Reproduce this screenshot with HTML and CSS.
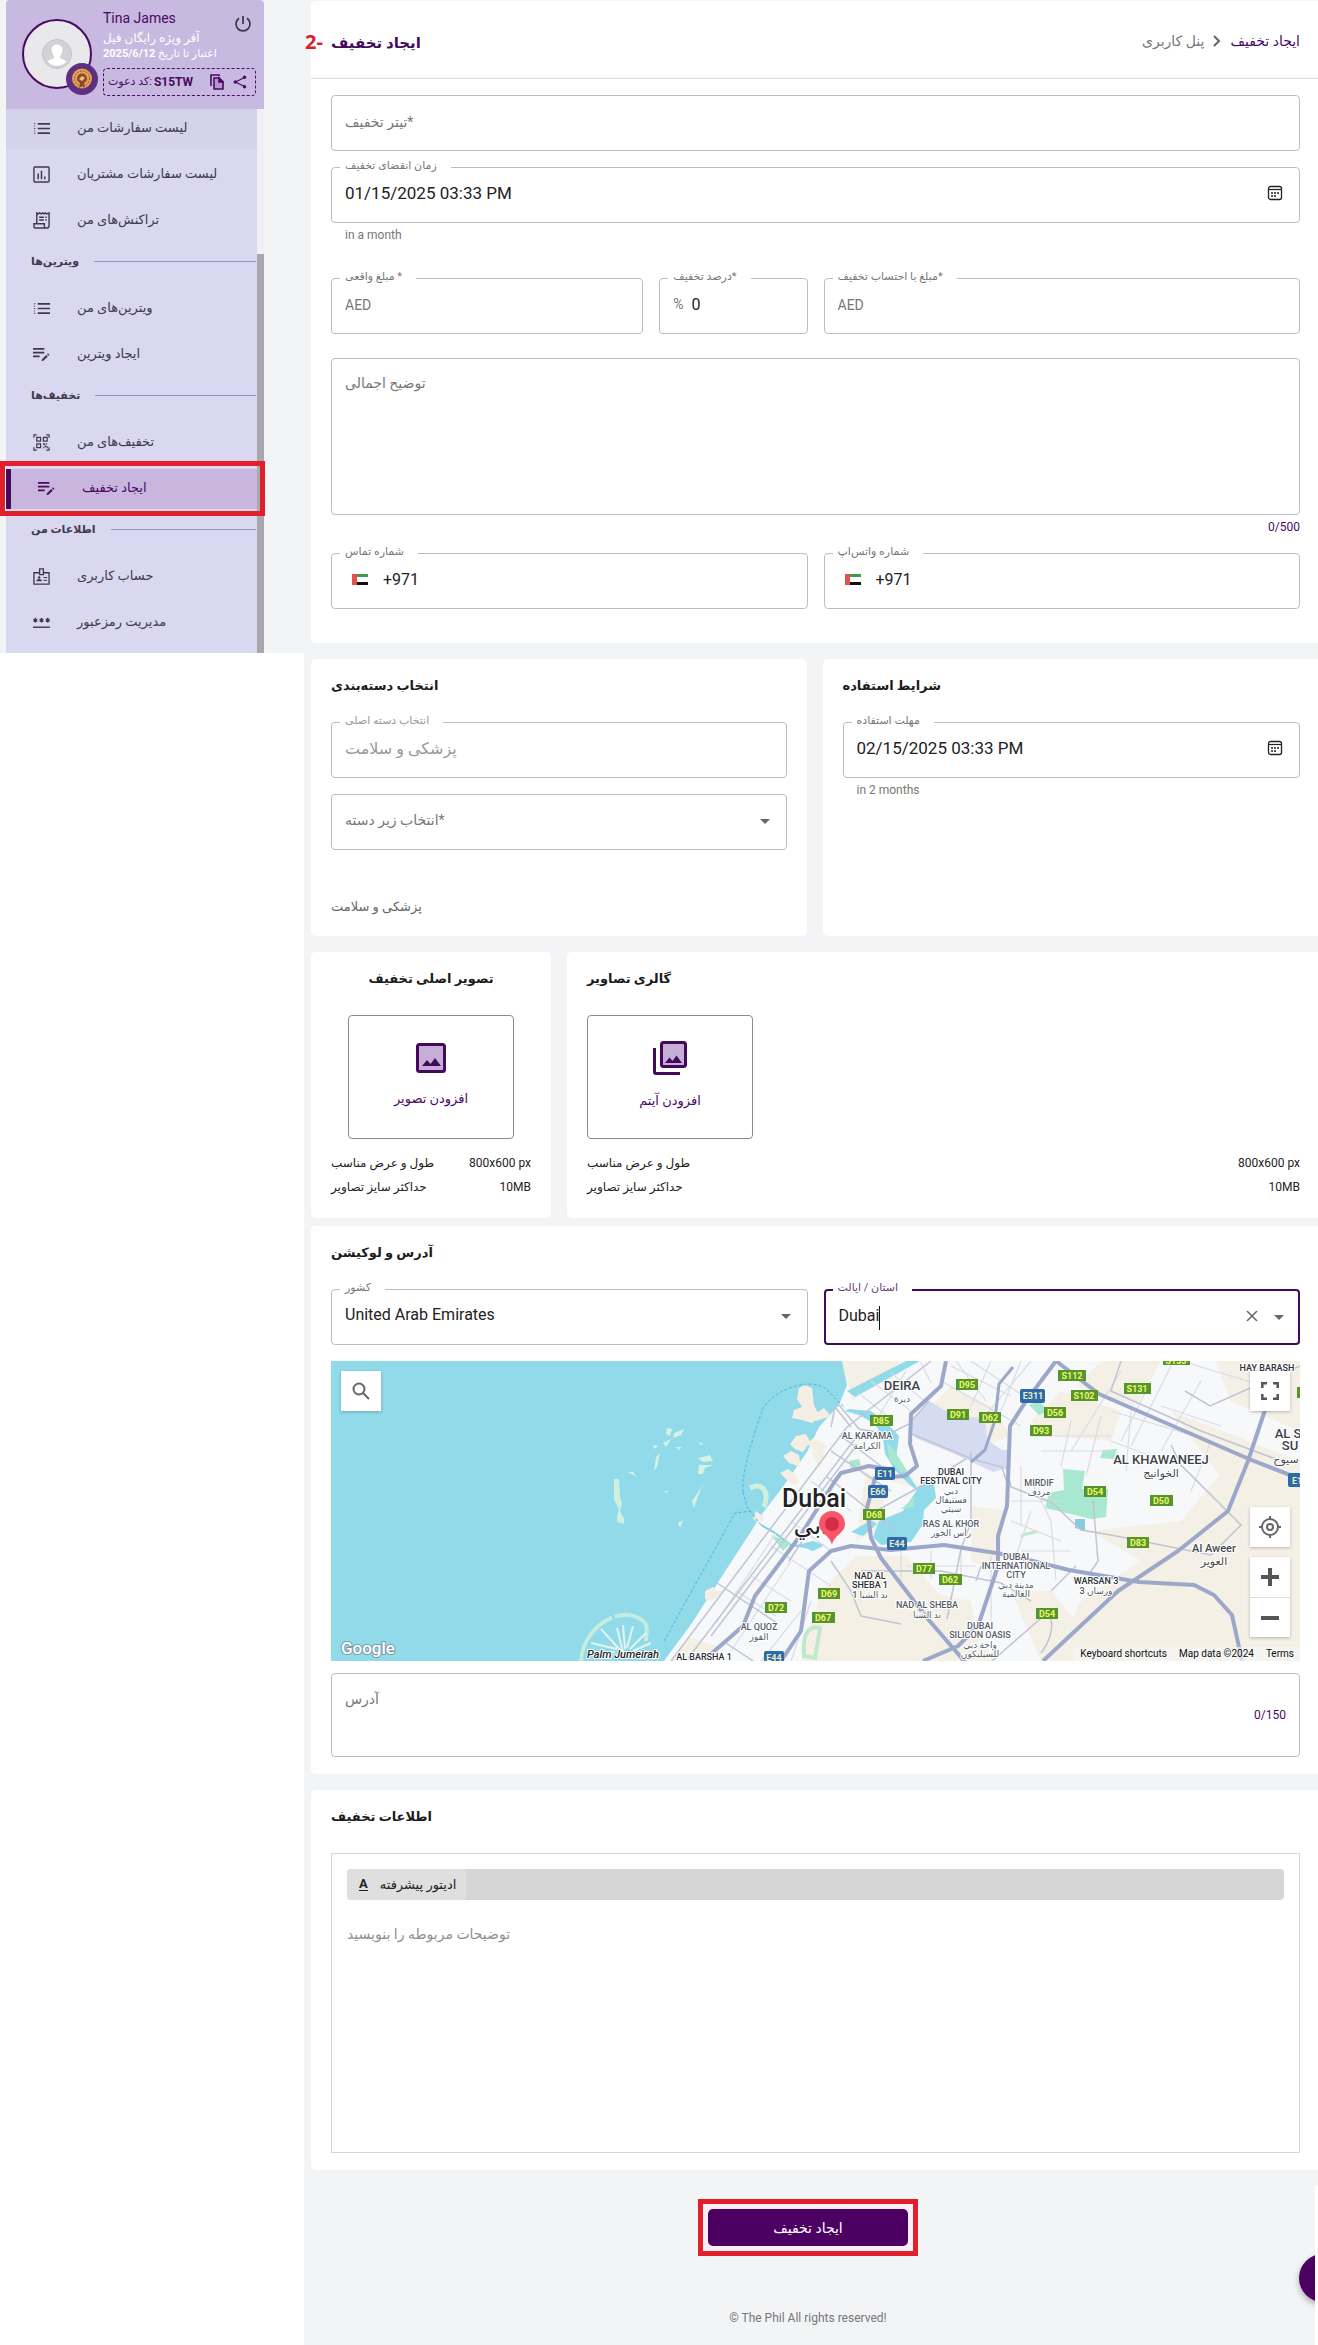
FILE: index.html
```html
<!DOCTYPE html>
<html lang="fa" dir="ltr">
<head>
<meta charset="utf-8">
<meta name="viewport" content="width=device-width, initial-scale=1">
<title>ایجاد تخفیف</title>
<link rel="stylesheet" href="styles.css">
</head>
<body>
<svg class="defs" aria-hidden="true">
  <symbol id="i-list" viewBox="0 0 18 18"><path d="M5 4h13M5 9h13M5 14h13" stroke="currentColor" stroke-width="1.8"/><path d="M1 4h1.400M1 9h1.400M1 14h1.400M1 6.500h1M1 11.500h1" stroke="currentColor" stroke-width="1"/></symbol>
  <symbol id="i-edit" viewBox="0 0 18 18"><path d="M0 3h12M0 7h12M0 11h7" stroke="currentColor" stroke-width="1.800"/><path d="M9 16l.5-2 4.500-4.500 1.700 1.700L11 15.600zM14.800 8.700l1-1 1.700 1.700-1 1z" fill="currentColor"/></symbol>
  <symbol id="i-calendar" viewBox="0 0 16 16"><rect x="1.500" y="1.500" width="13" height="13" rx="2" fill="none" stroke="currentColor" stroke-width="1.300"/><path d="M1.500 4.500h13" stroke="currentColor" stroke-width="1.200"/><path d="M4 8h2M7 8h2M10 8h2M4 11h2M7 11h2" stroke="currentColor" stroke-width="1.700"/></symbol>
  <symbol id="i-flag" viewBox="0 0 16 11"><path fill="#fff" d="M0 0h16v11H0z"/><path fill="#3f9a4a" d="M4 0h12v3H4z"/><path fill="#111" d="M4 8h12v3H4z"/><path fill="#e2504f" d="M0 0h5v11H0z"/></symbol>
</svg>

<aside class="side">
  <div class="profile">
    <div class="avatar">
      <svg viewBox="0 0 30 30" width="30" height="30"><circle cx="15" cy="15" r="14.500" fill="#d3d3d5" stroke="#c4c4c6"/><path d="M15 5.500c-3.600 0-5.500 2.500-5.300 6 .1 2 1 4 2.300 5.200v2c-1 1.600-5 1.600-6.300 4A12.500 12.500 0 0 0 24.300 22.700c-1.300-2.400-5.300-2.400-6.300-4v-2c1.300-1.200 2.200-3.200 2.300-5.200.2-3.500-1.700-6-5.300-6z" fill="#fff"/></svg>
      <svg class="medal" viewBox="0 0 32 32" width="32" height="32"><circle cx="16" cy="16" r="16" fill="#5f2f80"/><circle cx="16" cy="15.500" r="10" fill="#e0a153"/><circle cx="16" cy="15.500" r="7.500" fill="none" stroke="#8a4a2c" stroke-dasharray="1.500 1.500"/><circle cx="16" cy="15.500" r="5" fill="#8a4a2c"/><path d="M13 16l3-3 3 2-3 3z" fill="#f1c27a"/><path d="M14 20l-1 5 3-2 3 2-1-5z" fill="#8a4a2c"/></svg>
    </div>
    <div class="who">
      <div class="who-name"><span>Tina James</span>
        <button class="icon-btn" aria-label="خروج"><svg viewBox="0 0 18 18" width="18" height="18" fill="none" stroke="#3c3347" stroke-width="1.700"><path d="M9 1v8M5 3.200a7 7 0 1 0 8 0"/></svg></button>
      </div>
      <div class="who-plan" dir="rtl">آفر ویژه رایگان فیل</div>
      <div class="who-date" dir="rtl">اعتبار تا تاریخ <b>2025/6/12</b></div>
      <div class="invite">
        <span>کد دعوت</span><span>:</span><b>S15TW</b>
        <button class="icon-btn push" aria-label="کپی"><svg viewBox="0 0 14 16" width="14" height="16" fill="none" stroke="#4a0a63" stroke-width="1.600"><path d="M1 12V1h9"/><path d="M4 4h5l4 4v7H4z" fill="#b497cf"/><path d="M9 4v4h4z" fill="#4a0a63"/></svg></button>
        <button class="icon-btn" aria-label="اشتراک"><svg viewBox="0 0 14 14" width="14" height="14" fill="#4a0a63"><path d="M11.500 2.500L2.500 7l9 4.500" fill="none" stroke="#4a0a63" stroke-width="1.200"/><circle cx="11.500" cy="2.300" r="1.700"/><circle cx="2.300" cy="7" r="1.800"/><circle cx="11.500" cy="11.700" r="1.700"/></svg></button>
      </div>
    </div>
  </div>
  <div class="side-body">
    <nav class="menu">
      <a class="item hover" href="#"><svg><use href="#i-list"/></svg><span>لیست سفارشات من</span></a>
      <a class="item" href="#"><svg viewBox="0 0 18 18" fill="none" stroke="currentColor" stroke-width="1.500"><rect x="1" y="1" width="16" height="16" rx="1"/><path d="M5.500 8v6M9 5v9M12.500 11v3" stroke-width="1.600"/></svg><span>لیست سفارشات مشتریان</span></a>
      <a class="item" href="#"><svg viewBox="0 0 18 18" fill="none" stroke="currentColor" stroke-width="1.500"><path d="M4 12V1l1.500 1L7 1l1.500 1L10 1l1.500 1L13 1l1.500 1L17 1v13.500a2.500 2.500 0 0 1-2.500 2.500H3a2 2 0 0 1-2-2v-2.500h11V15a2 2 0 0 0 2.500 2"/><path d="M6.500 5.500h5M6.500 8.500h5M13 5.500h1.500M13 8.500h1.500"/></svg><span>تراکنش‌های من</span></a>
      <h3 class="section">ویترین‌ها</h3>
      <a class="item" href="#"><svg><use href="#i-list"/></svg><span>ویترین‌های من</span></a>
      <a class="item" href="#"><svg><use href="#i-edit"/></svg><span>ایجاد ویترین</span></a>
      <h3 class="section">تخفیف‌ها</h3>
      <a class="item" href="#"><svg viewBox="0 0 18 18" fill="none" stroke="currentColor" stroke-width="1.300"><path d="M1 4V1h3M14 1h3v3M17 14v3h-3M4 17H1v-3M4 3.500h4v4H4zM11 3.500h4v4h-4zM4 10.500h4v4H4z"/><path d="M10.500 10.500h1.500v1.500M13.500 10.500H15M12 13.500h1.500V12M15 13v2M10.500 14.500H12" stroke-width="1.200"/></svg><span>تخفیف‌های من</span></a>
      <a class="item active" href="#" aria-current="page"><svg><use href="#i-edit"/></svg><span>ایجاد تخفیف</span></a>
      <h3 class="section">اطلاعات من</h3>
      <a class="item" href="#"><svg viewBox="0 0 18 18" fill="none" stroke="currentColor" stroke-width="1.400"><path d="M7 5H1v12h16V5h-6"/><path d="M7 1h4v6H7z"/><path d="M11 10h4M11 13h4" stroke-width="1.200"/><circle cx="6.500" cy="10" r="1.300" fill="currentColor" stroke="none"/><path d="M3.500 14c0-3 6-3 6 0z" fill="currentColor" stroke="none"/></svg><span>حساب کاربری</span></a>
      <a class="item" href="#"><svg viewBox="0 0 18 18" fill="none" stroke="currentColor" stroke-width="1.300"><path d="M0 14h18" stroke-width="1.500"/><path d="M2.500 4v5M.5 5.200l4 2.600M4.500 5.200l-4 2.600M9 4v5M7 5.200l4 2.600M11 5.200L7 7.800M15.500 4v5M13.500 5.200l4 2.600M17.500 5.200l-4 2.600"/></svg><span>مدیریت رمزعبور</span></a>
    </nav>
    <div class="scroll"><div class="thumb"></div></div>
  </div>
</aside>

<main class="main">
  <section class="card first">
    <header class="head">
      <span class="step">2-</span>
      <h1>ایجاد تخفیف</h1>
      <nav class="crumbs"><a href="#">پنل کاربری</a><svg viewBox="0 0 8 12" width="8" height="12" fill="none" stroke="#666" stroke-width="2"><path d="M1 1l5 5-5 5"/></svg><a class="here" href="#">ایجاد تخفیف</a></nav>
    </header>
    <div class="stack pad">
      <div class="field"><input id="title" type="text" aria-label="تیتر تخفیف" placeholder="تیتر تخفیف*"></div>
      <div class="with-help spaced">
        <div class="field date"><label for="exp">زمان انقضای تخفیف</label><input id="exp" type="text" value="01/15/2025 03:33 PM"><button class="icon-btn" aria-label="تقویم"><svg width="16" height="16"><use href="#i-calendar"/></svg></button></div>
        <p class="help">in a month</p>
      </div>
      <div class="two">
        <div class="price">
          <div class="field"><label for="p1">مبلغ واقعی *</label><input id="p1" type="text" placeholder="AED"></div>
          <div class="field"><label for="pct">درصد تخفیف*</label><span class="unit">%</span><input id="pct" type="text" value="0"></div>
        </div>
        <div class="field"><label for="p2">مبلغ با احتساب تخفیف*</label><input id="p2" type="text" placeholder="AED"></div>
      </div>
      <div class="about">
        <textarea class="area" aria-label="توضیح اجمالی" placeholder="توضیح اجمالی"></textarea>
        <p class="count">0/500</p>
      </div>
      <div class="two">
        <div class="field phone"><label for="tel">شماره تماس</label><svg width="16" height="11"><use href="#i-flag"/></svg><input id="tel" type="tel" value="+971"></div>
        <div class="field phone"><label for="wa">شماره واتس‌اپ</label><svg width="16" height="11"><use href="#i-flag"/></svg><input id="wa" type="tel" value="+971"></div>
      </div>
    </div>
  </section>

  <div class="two">
    <section class="card box">
      <h2>انتخاب دسته‌بندی</h2>
      <div class="stack">
        <div class="field muted"><label for="cat">انتخاب دسته اصلی</label><input id="cat" type="text" value="پزشکی و سلامت" disabled></div>
        <div class="field"><select class="empty" aria-label="انتخاب زیر دسته"><option>انتخاب زیر دسته*</option></select><span class="arrow"></span></div>
      </div>
      <p class="chosen">پزشکی و سلامت</p>
    </section>
    <section class="card box flush">
      <h2>شرایط استفاده</h2>
      <div class="field date"><label for="use">مهلت استفاده</label><input id="use" type="text" value="02/15/2025 03:33 PM"><button class="icon-btn" aria-label="تقویم"><svg width="16" height="16"><use href="#i-calendar"/></svg></button></div>
      <p class="help">in 2 months</p>
    </section>
  </div>

  <div class="media">
    <section class="card box">
      <h2 class="center">تصویر اصلی تخفیف</h2>
      <button class="upload mid"><svg viewBox="0 0 30 30" width="30" height="30"><rect x="1.500" y="1.500" width="27" height="27" rx="2" fill="#c7aed6" stroke="#430a5c" stroke-width="3"/><path d="M6 23l5-6 3.500 4 4.500-6 6 8z" fill="#430a5c"/></svg><span>افزودن تصویر</span></button>
      <dl class="specs"><div><dt>طول و عرض مناسب</dt><dd>800x600 px</dd></div><div><dt>حداکثر سایز تصاویر</dt><dd>10MB</dd></div></dl>
    </section>
    <section class="card box flush">
      <h2>گالری تصاویر</h2>
      <button class="upload"><svg viewBox="0 0 34 34" width="34" height="34"><rect x="8.500" y="1.500" width="24" height="24" rx="2" fill="#c7aed6" stroke="#430a5c" stroke-width="3"/><path d="M12 22l4.500-5.500 3 3.500 4-5.500 5.500 7.500z" fill="#430a5c"/><path d="M1.500 7v24a1.500 1.500 0 0 0 1.500 1.500h24" fill="none" stroke="#430a5c" stroke-width="3"/></svg><span>افزودن آیتم</span></button>
      <dl class="specs"><div><dt>طول و عرض مناسب</dt><dd>800x600 px</dd></div><div><dt>حداکثر سایز تصاویر</dt><dd>10MB</dd></div></dl>
    </section>
  </div>

  <section class="card box flush tight">
    <h2>آدرس و لوکیشن</h2>
    <div class="two">
      <div class="field"><label for="country">کشور</label><select id="country"><option>United Arab Emirates</option></select><span class="arrow"></span></div>
      <div class="field focus"><label for="state">استان / ایالت</label><input id="state" type="text" value="Dubai"><span class="caret"></span><button class="icon-btn" aria-label="پاک کردن"><svg viewBox="0 0 12 12" width="12" height="12" stroke="#666" stroke-width="1.500"><path d="M1 1l10 10M11 1L1 11"/></svg></button><span class="arrow"></span></div>
    </div>
    <div class="map">
      <svg class="canvas" viewBox="0 0 969 300" preserveAspectRatio="xMidYMid slice">
        <rect width="969" height="300" fill="#f7f8fa"/>
        <g fill="#f5f0e6">
          <path d="M511 0h60l-50 40zM525 195l50 0 90 105H470l20-70zM560 120l35 10-20-20zM590 230l50 10 10 60h-40zM680 230l40 0 50 60-60 10zM700 60l30-30 60 20-10 30-60-5zM770 0h60l-25 45-60-20zM840 50l129 50v55l-80-40zM760 170l90-10 50-60 69 30v170H720l30-60 60-40z"/>
          <path d="M640 145l35 5-10 60-25-10zM600 45l20-20 40 20 20 30-30 10zM885 0h84v70l-70-30z"/>
          <path d="M340 300l18-24 30 10-14 14zM535 110l20 20-10 40-20 10zM480 90l14 4-6 14z"/>
        </g>
        <path d="M0 0h511l5 24-8 20-20 22-12 25-25 36-23 30-7 12-28 43-32 50-28 38H0z" fill="#90daea"/>
        <g fill="#f4eee4"><path d="M468 27l6-3 7 3 2 17 6 12-8 6-10-3-10-2 2-8 8-3-5-8zM459 83l6-8 10-2 4 8-7 10-8-3zM452 95l8-5 8 4 2 12-12-4zM449 112l8-4 8 6 4 8-8 2zM490 95l-14-12 6-6 14 8zM500 55l-15 5-4-5 12-8z"/><path d="M425 150l8 6-2 6-9-4zM394 230l-8 0-4-4-8 4 0 8 6 2z"/></g>
        <path d="M419 127c12-6 20 3 14 19" fill="none" stroke="#d0efdc" stroke-width="5"/>
        <path d="M283 118h5l1 17 2 8-2 7 4 8 0 5-7-2 0-6 2-7-5-9z" fill="#d0efdc"/>
        <path d="M250 300c2-34 40-58 62-40 6 5 3 12 3 20" fill="none" stroke="#c4ecdf" stroke-width="4" stroke-dasharray="56 3"/>
        <path d="M292 291l-6-24M290 290l-20-22M286 288l-26-6M294 288l-2-24M296 287l6-22M299 288l16-16M302 290l18-8M284 291l-20 2" fill="none" stroke="#e2f5ea" stroke-width="2"/>
        <g fill="#d5f1e3"><path d="M336 67l5 1-2 7-4-2zM343 72l10-4-3 6-8 3zM332 82l8-4-5 8zM322 84l5 1-4 3zM325 96l4-4-3 14-3 4zM345 86l6 0-3 3zM367 97l12-3 3 6-10 1zM368 104h14l-8 3-2 6h-5zM370 127l3-6-7 17-3 9-2-7zM347 162l5-3-3 8zM297 111l5 0 4 5zM333 130l5 0-3 2zM368 81l5 2-4 1z"/></g>
        <path d="M333 280L404 152l16-2M412 131c-2-20 12-60 20-84 14-20 45-30 62-20l20 20M412 131l4 15 14 18" fill="none" stroke="#48b8db" stroke-dasharray="3 2"/>
        <path d="M430 164l14 8 16 12 16 2" fill="none" stroke="#7fcbe0" stroke-width="2"/>
        <g fill="#90daea"><path d="M516 30L575 0h14L524 36z"/><path d="M518 48l22 2 14 10 14 15-3 22 12 16 13 20-12-10-14-14-10-16-2-16-8-14-16-9-14-4z"/><path d="M548 160l24-10 20-30 10-5 3 22-12 12-1 14-12 18-30 3-8-8z"/><path d="M520 171l20-12 6 4-14 12zM466 184l16-4 12 4-12 6z"/><path d="M744 158l10 0 0 12-10-3z" fill="#83cddf"/></g>
        <g fill="#a9e8d0"><path d="M556 82l8 8 12 20-6 2-12-14zM732 108l22 2-3 18 26 0-2 28-15 2-20-5-26-6 4-15 15-3zM698 44l10-4 10 10-10 4zM772 89l14-1-3 10-14-1zM440 174l20 8-8 8zM570 148l14-12-2 10zM518 100l10-2 2 6-10 4z"/><path d="M473 295c-2-30 10-30 16-28l-5 30z" fill="none" stroke="#bfe8cc" stroke-width="4"/><path d="M690 176c6-6 10-2 16-6" fill="none" stroke="#bfe8cc" stroke-width="3"/></g>
        <path d="M598 40l26 15 30 2 2 22 15 10 7 0-2 18-14 4-38-18-40-16-6-16z" fill="#d5dcf1"/>
        <g fill="none" stroke="#d9dce6" stroke-width="1.200">
          <path d="M420 215l40 25M405 230l40 25M440 185l60 40M460 160l40 30M480 120l40 30M500 90l50 35M385 262l60-90M400 290l60-90M480 240l-20 60M430 300l40-50"/>
          <path d="M625 0l30 40M640 0l60 40M660 0L640 45M690 0l-20 50M610 20l80 45M620 5l60 30M700 0l-50 60M540 20l40 30M560 12l36 30M590 2l10 20M530 34l30 24M545 60l30-50"/>
          <path d="M790 10l-50 80M820 20l-30 60M770 55l-15 60M740 60l-10 45M700 75h80M710 90h70M780 80l40 15M800 50l-5 60M840 5l-40 80M870 20l-40 70M850 0l100 30M830 45l60 20M780 50l100 30-20 50"/>
          <path d="M570 190v30M600 190v28M630 190v25M575 205h70M690 105v60M680 140h50M700 120l20 40M680 160l50 20M700 150l-20 60M720 160l5 60M690 190h50M660 195v80"/>
        </g>
        <g fill="none" stroke="#c0c4d4" stroke-width="1.500">
          <path d="M340 300L516 66 600 0M355 300L530 70M380 275L525 85M395 282l30 20M386 222l60 40M520 66l-16-20-4 20M508 44l20 24 30 5 20-10 20-23M510 75l40 30M500 90l60 40M495 115l70 55"/>
          <path d="M581 73l60 25 30 8 5 16M640 91v70l-10 27-12 60-2 10M530 210h80l60 12 30 18M650 205l-5 15M500 200l20 30 10 25 40 8M478 170l-20 30M545 150l40-22 50-30"/>
          <path d="M675 106l5 20 40 15 30 28 30 5 100 20 30-30-60-60-10-20M762 140l5 60-8 12M790 0l-10 30 90 40 80 30M969 5l-90 40-25-15M720 230l25-25M716 252l-55 48M716 252c10 10 2 30-6 40"/>
        </g>
        <g class="highways">
          <path d="M372 300l40-35 12-30 45-60 35-55 6-8 28-7 25 4"/>
          <path d="M450 300l20-30 8-60 22-20 20-5 40 4 53-5 65 10 60 15 70 12 55 3 20 10 18 20 10 46"/>
          <path d="M615 0l-5 25-30 28-1 30 7 22-12 10-30 2-8 30 4 30 10 20 46 60 39 45"/>
          <path d="M725 0l-30 40-16 25-3 80-9 30v30l-20 60-20 20-35 15"/>
          <path d="M682 6l-14 17-4 36-10 30-14 12" stroke-width="3"/>
          <path d="M725 0l43 33 150 65 51 20M937 40l-20 60-20 50-50 40-60 40-75 70"/>
        </g>
        <g class="d-road">
          <g><rect x="539" y="54" width="23" height="11"/><rect x="625" y="18" width="22" height="11"/><rect x="616" y="48" width="22" height="11"/><rect x="648" y="51" width="22" height="11"/><rect x="713" y="46" width="22" height="11"/><rect x="699" y="64" width="22" height="11"/><rect x="727" y="9" width="28" height="11"/><rect x="740" y="29" width="27" height="11"/><rect x="793" y="22" width="27" height="11"/><rect x="832" y="-7" width="27" height="11"/><rect x="753" y="125" width="22" height="11"/><rect x="819" y="134" width="23" height="11"/><rect x="796" y="176" width="22" height="11"/><rect x="532" y="148" width="22" height="11"/><rect x="582" y="202" width="22" height="11"/><rect x="608" y="213" width="23" height="11"/><rect x="705" y="247" width="22" height="11"/><rect x="487" y="227" width="22" height="11"/><rect x="481" y="251" width="23" height="11"/><rect x="434" y="241" width="22" height="11"/><rect x="966" y="26" width="6" height="11"/></g>
          <text x="550" y="63">D85</text><text x="636" y="27">D95</text><text x="627" y="57">D91</text><text x="659" y="60">D62</text><text x="724" y="55">D56</text><text x="710" y="73">D93</text><text x="741" y="18">S112</text><text x="753" y="38">S102</text><text x="806" y="31">S131</text><text x="845" y="3">S133</text><text x="764" y="134">D54</text><text x="830" y="143">D50</text><text x="807" y="185">D83</text><text x="543" y="157">D68</text><text x="593" y="211">D77</text><text x="619" y="222">D62</text><text x="716" y="256">D54</text><text x="498" y="236">D69</text><text x="492" y="260">D67</text><text x="445" y="250">D72</text>
        </g>
        <g class="e-road">
          <rect x="544" y="106" width="20" height="13" rx="2"/><rect x="537" y="124" width="20" height="13" rx="2"/><rect x="556" y="176" width="20" height="13" rx="2"/><rect x="689" y="28" width="25" height="14" rx="2"/><rect x="433" y="290" width="20" height="13" rx="2"/><rect x="957" y="112" width="20" height="14" rx="2"/>
          <text x="554" y="116">E11</text><text x="547" y="134">E66</text><text x="566" y="186">E44</text><text x="702" y="38">E311</text><text x="443" y="300">E44</text><text x="966" y="123">E1</text>
        </g>
        <g class="place"><text x="571" y="29" class="big">DEIRA</text><text x="571" y="41">ديرة</text><text x="536" y="78">AL KARAMA</text><text x="536" y="88">الكرامة</text><text x="620" y="114" class="dark">DUBAI</text><text x="620" y="123" class="dark">FESTIVAL CITY</text><text x="620" y="133">دبي</text><text x="620" y="142">فستيفال</text><text x="620" y="151">سيتي</text><text x="620" y="166">RAS AL KHOR</text><text x="620" y="175">رأس الخور</text><text x="708" y="125">MIRDIF</text><text x="708" y="134">مردف</text><text x="830" y="103" class="big">AL KHAWANEEJ</text><text x="830" y="116" class="ar">الخوانيج</text><text x="685" y="199">DUBAI</text><text x="685" y="208">INTERNATIONAL</text><text x="685" y="217">CITY</text><text x="685" y="227">مدينة دبي</text><text x="685" y="236">العالمية</text><text x="539" y="218" class="dark">NAD AL</text><text x="539" y="227" class="dark">SHEBA 1</text><text x="539" y="237">ند الشبا 1</text><text x="596" y="247">NAD AL SHEBA</text><text x="596" y="257">ند الشبا</text><text x="649" y="268">DUBAI</text><text x="649" y="277">SILICON OASIS</text><text x="649" y="287">واحة دبي</text><text x="649" y="296">للسيليكون</text><text x="765" y="223" class="dark">WARSAN 3</text><text x="765" y="233">ورسان 3</text><text x="936" y="10" class="dark">HAY BARASH</text><text x="428" y="269">AL QUOZ</text><text x="428" y="279">القوز</text><text x="373" y="299" class="dark">AL BARSHA 1</text><text x="957" y="77" class="big">AL S</text><text x="959" y="89" class="big">SU</text><text x="955" y="102" class="ar">سيوح</text></g>
        <g class="town"><text x="883" y="191">Al Aweer</text><text x="883" y="204">العوير</text><text x="292" y="297" class="ital">Palm Jumeirah</text></g>
        <g class="city"><text x="483" y="146">Dubai</text><text x="482" y="173">دبي</text></g>
        <path d="M501 184c-2-10-13-12-13-21a13 13 0 0 1 26 0c0 9-11 11-13 21z" fill="#f9566a"/><circle cx="501" cy="163" r="7" fill="#d62a4b"/>
        <text class="brand" x="10" y="293">Google</text>
      </svg>
      <button class="map-btn find" aria-label="جستجو"><svg viewBox="0 0 18 18" width="18" height="18" fill="none" stroke="#666" stroke-width="2"><circle cx="7" cy="7" r="5.500"/><path d="M11 11l6 6"/></svg></button>
      <div class="map-tools">
        <button class="map-btn" aria-label="تمام صفحه"><svg viewBox="0 0 18 18" width="18" height="18" fill="none" stroke="#555" stroke-width="2.500"><path d="M1.300 6V1.300H6M12 1.300h4.700V6M16.700 12v4.700H12M6 16.700H1.300V12"/></svg></button>
        <button class="map-btn push-down" aria-label="موقعیت من"><svg viewBox="0 0 22 22" width="22" height="22" fill="none" stroke="#666" stroke-width="2"><circle cx="11" cy="11" r="8"/><circle cx="11" cy="11" r="3"/><path d="M11 0v3M11 19v3M0 11h3M19 11h3"/></svg></button>
        <div class="zoom">
          <button aria-label="بزرگ‌نمایی"><svg viewBox="0 0 18 18" width="18" height="18" stroke="#555" stroke-width="4"><path d="M9 0v18M0 9h18"/></svg></button>
          <button aria-label="کوچک‌نمایی"><svg viewBox="0 0 18 18" width="18" height="18" stroke="#555" stroke-width="4"><path d="M0 9h18"/></svg></button>
        </div>
      </div>
      <div class="credits"><a href="#">Keyboard shortcuts</a><span>Map data ©2024</span><a href="#">Terms</a></div>
    </div>
    <div class="address"><textarea aria-label="آدرس" placeholder="آدرس"></textarea><span>0/150</span></div>
  </section>

  <section class="card box flush last">
    <h2>اطلاعات تخفیف</h2>
    <div class="editor">
      <div class="toolbar"><button><span class="rich">A</span><span>ادیتور پیشرفته</span></button></div>
      <textarea aria-label="توضیحات" placeholder="توضیحات مربوطه را بنویسید"></textarea>
    </div>
  </section>

  <footer class="foot">
    <div class="mark"><button class="submit">ایجاد تخفیف</button></div>
    <p>© The Phil All rights reserved!</p>
    <button class="fab" aria-label="گفتگو"></button>
  </footer>
</main>
</body>
</html>
```
FILE: styles.css
```css
* { box-sizing: border-box; }
body {
  margin: 0;
  display: flex;
  align-items: flex-start;
  min-height: 100vh;
  background: #fff;
  color: #222;
  font: 14px/24px Roboto, "DejaVu Sans", sans-serif;
}
h1, h2, h3, p, dl, dd { margin: 0; }
a { color: inherit; text-decoration: none; }
button, input, select, textarea { font: inherit; color: inherit; }
button { border: 0; padding: 0; background: none; cursor: pointer; }
.defs { position: absolute; width: 0; height: 0; }
.icon-btn { display: flex; flex: none; }

/* Sidebar */
.side { flex: none; width: 304px; padding: 0 40px 0 6px; background: #f3f4f6; }
.profile {
  display: flex;
  gap: 11px;
  height: 109px;
  padding: 6px 8px 0 16px;
  border-radius: 4px 4px 0 0;
  background: #c8b9e0;
}
.avatar {
  position: relative;
  display: flex;
  flex: none;
  align-items: center;
  justify-content: center;
  width: 70px;
  height: 70px;
  margin-top: 13px;
  border: 2px solid #4a0a63;
  border-radius: 50%;
  background: #e9e9ec;
}
.medal { position: absolute; right: -8px; bottom: -8px; }
.who { flex: 1; min-width: 0; color: #fff; font-size: 12px; line-height: 16px; }
.who-name { display: flex; justify-content: space-between; height: 24px; color: #4a0a63; font-size: 14px; line-height: 24px; }
.who-name .icon-btn { margin: 9px 4px 0 0; }
.who-plan, .who-date { text-align: left; white-space: nowrap; }
.who-date { font-size: 11px; }
.invite {
  display: flex;
  align-items: center;
  height: 28px;
  margin-top: 6px;
  padding: 0 8px 0 4px;
  border: 1px dashed #4a0a63;
  border-radius: 4px;
  color: #4a0a63;
  font-size: 11px;
}
.invite b { margin-left: 2px; font-size: 12px; }
.invite .push { margin: 0 9px 0 auto; }

.side-body { display: flex; }
.menu { flex: 1; padding-bottom: 4px; background: #dad8f0; }
.item {
  position: relative;
  display: flex;
  align-items: center;
  gap: 27px;
  height: 40px;
  margin-bottom: 6px;
  padding: 0 0 2px 27px;
  color: #40394d;
  font-size: 13px;
}
.item svg { flex: none; width: 17px; height: 17px; }
.hover { background: #d5d2eb; }
.active { border-left: 5px solid #430a5c; background: #c8b6df; color: #4a0a63; }
.active::after {
  content: "";
  position: absolute;
  inset: -8px -8px -7px -11px;
  border: 5px solid #e2202c;
}
.section {
  display: flex;
  align-items: center;
  gap: 15px;
  height: 42px;
  padding: 0 1px 13px 25px;
  color: #40394d;
  font-size: 11px;
}
.section::after { content: ""; flex: 1; height: 1px; background: #9993c0; }
.scroll { width: 7px; padding-top: 145px; background: #f1f1f5; }
.thumb { height: 100%; background: #a9a8ae; }

/* Page column */
.main {
  display: flex;
  flex: 1;
  flex-direction: column;
  gap: 16px;
  min-width: 0;
  min-height: 100vh;
  padding: 1px 0 0 7px;
  background: #f3f4f6;
}
.card { border-radius: 5px 0 0 5px; background: #fff; }
.two, .price, .media { display: grid; grid-template-columns: 1fr 1fr; gap: 16px; }
.two > *, .price > *, .media > * { min-width: 0; }
.price { grid-template-columns: 312fr 148fr; }
.media { grid-template-columns: 240px 1fr; }
.media > .card:first-child, .main > .two > .card:first-child { border-radius: 5px; }
.stack { display: flex; flex-direction: column; gap: 16px; }
.pad { padding: 16px 18px 34px 20px; }
.box { padding: 15px 20px 17px; }
.flush { padding-right: 18px; }
.tight { margin-top: -8px; }
h2 { margin-bottom: 24px; color: #1c1c1c; font-size: 13px; line-height: 24px; }
.center { text-align: center; }

.head {
  position: relative;
  display: flex;
  align-items: center;
  justify-content: space-between;
  height: 78px;
  padding: 6px 18px 0 20px;
  border-bottom: 1px solid #dcdcdf;
}
h1 { color: #430a5c; font-size: 15px; }
.step { position: absolute; left: -6px; top: 29px; color: #d4222c; font: bold 20px/24px "Noto Sans", sans-serif; }
.crumbs { display: flex; align-items: center; gap: 9px; padding-bottom: 4px; color: #777; }
.crumbs .here { color: #4a0a63; }

/* Form controls */
.field {
  position: relative;
  display: flex;
  align-items: center;
  height: 56px;
  padding: 0 16px 4px 13px;
  border: 1px solid #bdbdc1;
  border-radius: 4px;
}
.field label {
  position: absolute;
  left: 8px;
  top: -10px;
  padding: 0 14px 0 5px;
  background: #fff;
  color: #777;
  font-size: 11px;
  line-height: 16px;
  white-space: nowrap;
}
input, select, textarea { flex: 1; width: 100%; min-width: 0; border: 0; padding: 0; background: none; outline: 0; }
input, select { height: 30px; font-size: 16px; appearance: none; }
.date input { font-size: 17px; }
::placeholder { color: #777; font-size: 14px; opacity: 1; }
select.empty { color: #777; font-size: 14px; }
.muted input, .muted label { color: #999; }
.unit { margin-right: 8px; color: #777; }
.phone { padding-left: 20px; }
.phone svg { flex: none; margin-right: 15px; }
.arrow { flex: none; margin: 3px 0 0 12px; border: 5px solid transparent; border-top-color: #666; border-bottom: 0; }
.focus { padding: 0 14px 3px 13px; border: 2px solid #430a5c; }
.focus label { left: 7px; top: -11px; color: #6a3a80; }
.focus .arrow { margin-left: 16px; }
.caret { position: absolute; left: 53px; top: 15px; width: 1px; height: 24px; background: #111; }
.help { padding: 2px 14px 0; color: #777; font-size: 12px; line-height: 20px; }
.spaced { padding-bottom: 17px; }
textarea { display: block; resize: none; }
.about { margin-top: 8px; }
.area { height: 157px; padding: 12px 13px; border: 1px solid #bdbdc1; border-radius: 4px; }
.count { height: 22px; color: #4a0a63; font-size: 12px; text-align: right; }
.chosen { margin-top: 45px; color: #666; font-size: 13px; }

.upload {
  display: flex;
  flex-direction: column;
  align-items: center;
  justify-content: center;
  gap: 14px;
  width: 166px;
  height: 124px;
  border: 1px solid #8d8794;
  border-radius: 4px;
  color: #4a0a63;
  font-size: 13px;
}
.mid { margin: 0 auto; }
.specs { margin: 12px 0 2px; font-size: 12px; }
.specs div { display: flex; justify-content: space-between; }

/* Map */
.map { position: relative; height: 300px; margin: 16px 0 12px; overflow: hidden; }
.canvas { display: block; width: 100%; height: 100%; }
.canvas text { text-anchor: middle; paint-order: stroke; }
.highways { fill: none; stroke: #9ba8ca; stroke-width: 4; stroke-linejoin: round; }
.d-road rect { fill: #57942b; }
.e-road rect { fill: #2f69ab; }
.d-road text { fill: #e9f96a; font-size: 9px; font-weight: 700; }
.e-road text { fill: #e4efc0; font-size: 9px; font-weight: 700; }
.place text, .town text { fill: #555c68; stroke: #fff; stroke-width: 2px; font-size: 9px; font-weight: 500; }
.place .dark { fill: #2d3038; }
.place .big { fill: #3c4048; font-size: 13px; }
.place .ar, .town text { fill: #44484f; font-size: 11px; }
.town .ital { fill: #23262b; font-style: italic; }
.city text { fill: #222; stroke: #fff; stroke-width: 3px; font-size: 25px; font-weight: 500; }
.canvas .brand { fill: #fff; stroke: #7d9aa5; stroke-width: 2px; font-size: 17px; font-weight: 500; text-anchor: start; }
.map-btn, .zoom button { display: flex; align-items: center; justify-content: center; width: 40px; height: 40px; background: #fff; }
.map-btn { box-shadow: 0 1px 3px rgba(0, 0, 0, .25); }
.find { position: absolute; left: 10px; top: 10px; }
.map-tools { position: absolute; right: 10px; top: 10px; bottom: 24px; display: flex; flex-direction: column; gap: 10px; }
.push-down { margin-top: auto; }
.zoom { background: #fff; box-shadow: 0 1px 3px rgba(0, 0, 0, .25); }
.zoom button + button { border-top: 1px solid #ddd; }
.credits {
  position: absolute;
  right: 0;
  bottom: 0;
  display: flex;
  gap: 12px;
  padding: 0 6px;
  background: rgba(245, 245, 245, .7);
  color: #111;
  font-size: 10px;
  line-height: 14px;
}
.address { display: flex; height: 84px; padding: 13px; border: 1px solid #bdbdc1; border-radius: 4px; }
.address span { align-self: center; color: #4a0a63; font-size: 12px; }

/* Description editor */
.editor { height: 300px; padding: 15px; border: 1px solid #d6d6da; }
.toolbar { margin-bottom: 22px; border-radius: 4px; background: #d6d6d6; }
.toolbar button {
  display: flex;
  align-items: center;
  gap: 12px;
  height: 31px;
  padding: 0 10px 0 12px;
  border-radius: 4px;
  background: #dfdfdf;
  font-size: 13px;
}
.rich { border-bottom: 1px solid #222; font-size: 13px; font-weight: 700; line-height: 12px; }
.editor textarea { height: 200px; }
.editor ::placeholder { color: #8d9096; }

/* Footer */
.foot {
  position: relative;
  display: flex;
  flex: 1;
  flex-direction: column;
  align-items: center;
  gap: 50px;
  margin-left: -7px;
  padding: 13px 3px 16px 0;
  overflow: hidden;
  border-right: 3px solid #fff;
  color: #777;
  font-size: 12px;
}
.mark { padding: 5px; border: 5px solid #e2202c; background: #fbeff8; }
.submit { display: block; width: 200px; height: 37px; border-radius: 5px; background: #4b0062; color: #fff; font-size: 14px; }
.fab { position: absolute; right: -32px; top: 68px; width: 48px; height: 48px; border-radius: 50%; background: #4b0062; box-shadow: 0 3px 6px rgba(0, 0, 0, .3); }
```
